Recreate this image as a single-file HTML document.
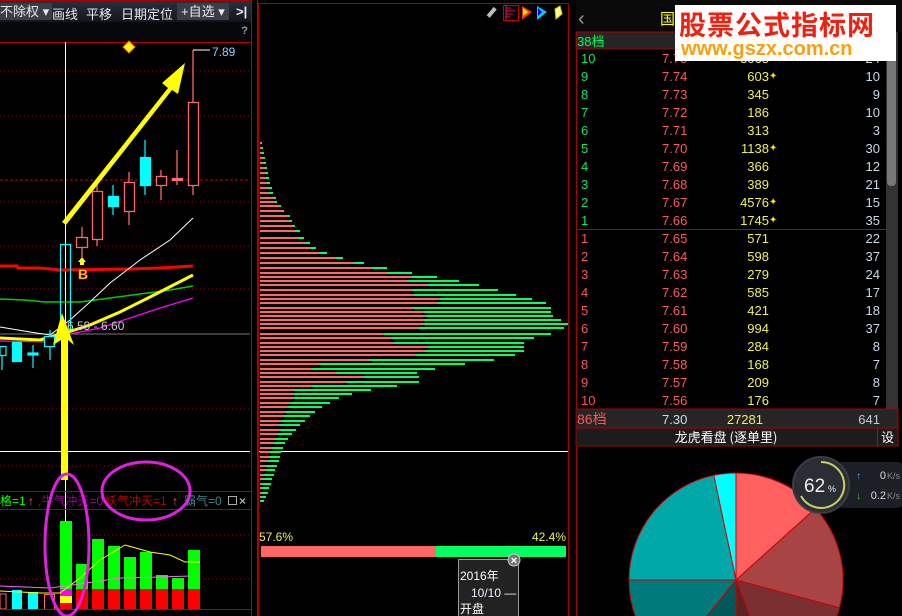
<!DOCTYPE html>
<html><head><meta charset="utf-8">
<style>
*{margin:0;padding:0;box-sizing:border-box}
html,body{width:902px;height:616px;overflow:hidden}
body{background:#000;position:relative;font-family:"Liberation Sans","Noto Sans CJK SC",sans-serif;color:#ddd}
.a{position:absolute}
svg{overflow:hidden}
.tb{left:0;top:0;width:252px;height:22px;background:linear-gradient(#2a2f3d,#12151c);font-size:13px;color:#e8e8e8;border-top:1px solid #a00}
.tb span{position:absolute;top:3px;white-space:nowrap}
.row{position:absolute;left:576px;width:310px;height:18px;font-size:13px;line-height:18px}
.row .l{position:absolute;left:5px}
.row .p{position:absolute;left:86px;color:#ff5a5a}
.row .v{position:absolute;right:117px;color:#f0f050;text-align:right}
.row .s{position:absolute;left:193px;color:#ffe000;font-size:10px}
.row .c{position:absolute;right:6px;color:#c8d8e8;text-align:right}
</style></head><body>

<div class="a tb">
<span style="left:-3px;background:#3a3e48;padding:0 3px;height:17px;top:2px;line-height:17px">不除权 ▾</span>
<span style="left:52px">画线</span><span style="left:86px">平移</span><span style="left:121px">日期定位</span>
<span style="left:177px;background:#3a3e48;padding:0 4px;height:17px;top:2px;line-height:17px">+自选 ▾</span>
<span style="left:236px;font-weight:bold">&gt;|</span>
</div>
<div class="a" style="left:0;top:22px;width:252px;height:20px;background:#07080b"><span class="a" style="right:4px;top:3px;font-size:11px;color:#999;font-weight:bold">?</span></div>

<svg class="a" style="left:0;top:0" width="902" height="616">
<line x1="0" y1="42.5" x2="252" y2="42.5" stroke="#b00"/>
<line x1="251.5" y1="0" x2="251.5" y2="616" stroke="#b00"/>
<line x1="257.5" y1="0" x2="257.5" y2="616" stroke="#b00"/>
<g stroke="#a00" stroke-dasharray="1 3">
<line x1="0" y1="71" x2="250" y2="71"/><line x1="0" y1="116" x2="250" y2="116"/>
<line x1="0" y1="202" x2="250" y2="202"/><line x1="0" y1="246" x2="250" y2="246"/>
<line x1="0" y1="289" x2="250" y2="289"/><line x1="0" y1="409" x2="250" y2="409"/>
<line x1="0" y1="466" x2="250" y2="466"/><line x1="0" y1="535" x2="250" y2="535"/><line x1="0" y1="579" x2="250" y2="579"/>
</g>
<line x1="0" y1="180" x2="250" y2="180" stroke="#c00" stroke-dasharray="3 2"/>
<line x1="0" y1="334" x2="250" y2="334" stroke="#777"/>
<line x1="0" y1="451.5" x2="250" y2="451.5" stroke="#fff"/>
<line x1="65.5" y1="42" x2="65.5" y2="600" stroke="#fff"/>
<polyline points="0,266 17,266 18,268 40,268 60,270 130,269 160,268 193,266" fill="none" stroke="#f00" stroke-width="3"/>
<polyline points="0,299 25,300 45,302 80,302 110,298 140,294 170,290 193,286" fill="none" stroke="#0c0" stroke-width="1.5"/>
<polyline points="0,327 30,332 50,335 70,320 90,302 110,283 140,260 170,240 193,218" fill="none" stroke="#fff" stroke-width="1"/>
<polyline points="0,338 40,340 65,333 90,325 120,312 150,297 193,275" fill="none" stroke="#ff0" stroke-width="3"/>
<polyline points="0,341 50,342 70,334 100,328 130,318 160,308 193,298" fill="none" stroke="#f0f" stroke-width="1.2"/>
<g fill="none" stroke="#f66" stroke-width="1.3">
<line x1="82" y1="227" x2="82" y2="257"/><rect x="76.5" y="237.5" width="11" height="10" fill="#000"/>
<line x1="97" y1="180" x2="97" y2="246"/><rect x="92.5" y="191.5" width="10" height="48" fill="#000"/>
<line x1="129" y1="172" x2="129" y2="225"/><rect x="124.5" y="182.5" width="10" height="29" fill="#000"/>
<line x1="161" y1="170" x2="161" y2="200"/><rect x="156.5" y="176.5" width="10" height="9" fill="#000"/>
<line x1="177" y1="150" x2="177" y2="185"/><rect x="172.5" y="178.5" width="10" height="2" fill="#6cc"/>
<line x1="193" y1="50" x2="193" y2="195"/><rect x="188.5" y="102.5" width="10" height="83" fill="#000"/>
<line x1="193" y1="50" x2="210" y2="50" stroke="#ccc"/>
</g>
<g stroke="#0ff" stroke-width="1.2">
<line x1="113" y1="185" x2="113" y2="215"/><rect x="108.5" y="196.5" width="10" height="10" fill="#0ff"/>
<line x1="145" y1="140" x2="145" y2="195"/><rect x="140.5" y="157.5" width="10" height="28" fill="#0ff"/>
<rect x="60.5" y="244.5" width="10" height="85" fill="none"/>
<rect x="0" y="346.5" width="6" height="9" fill="none"/>
<rect x="12.5" y="342.5" width="9" height="19" fill="#0ff"/>
<line x1="33" y1="345" x2="33" y2="368"/><rect x="28" y="353" width="10" height="2" fill="#0ff"/>
<line x1="50" y1="330" x2="50" y2="360"/><rect x="44.5" y="336.5" width="10" height="10" fill="#000"/>
<line x1="2" y1="355" x2="2" y2="370"/>
</g>
<text x="67" y="330" font-size="12" fill="#ccc" font-family="Liberation Sans">6.59 - 6.60</text>
<text x="212" y="56" font-size="12" fill="#9cf" font-family="Liberation Sans">7.89</text>
<polygon points="129,41 135,47 129,53 123,47" fill="#ff0" stroke="#f60"/>
<polygon points="82,257 86,262 84,262 84,265 80,265 80,262 78,262" fill="#ff0"/>
<text x="78" y="279" font-size="14" font-weight="bold" fill="#ff0" stroke="#f00" stroke-width="0.6" font-family="Liberation Sans">B</text>
<polygon points="62,222 168,88 162,83 185,63 178,94 172,90 66,225" fill="#ff0"/>
<polygon points="61,480 61,340 53,345 62,313 74,345 68,340 68,480" fill="#ff0"/>
<line x1="0" y1="491.5" x2="251" y2="491.5" stroke="#a00"/>
<line x1="0" y1="509.5" x2="251" y2="509.5" stroke="#a00"/>
<g font-size="12" font-family="Liberation Sans,Noto Sans CJK SC,sans-serif">
<text x="0" y="505" fill="#0f0">格=1</text><text x="28" y="505" fill="#f66">↑</text>
<text x="38" y="505" fill="#909">,牛气冲天=0</text>
<text x="105" y="505" fill="#b00">妖气冲天=1</text><text x="172" y="505" fill="#f66">↑</text>
<text x="184" y="505" fill="#488">霸气=0</text>
<rect x="228.5" y="496.5" width="8" height="8" fill="none" stroke="#aaa"/>
<text x="239" y="505" fill="#aaa" font-weight="bold">×</text>
</g>
<g fill="#0f0">
<rect x="60" y="521" width="12" height="68"/><rect x="76" y="564" width="12" height="25"/>
<rect x="92" y="539" width="12" height="50"/><rect x="108" y="546" width="12" height="43"/>
<rect x="124" y="557" width="12" height="32"/><rect x="140" y="552" width="12" height="37"/>
<rect x="156" y="575" width="12" height="14"/><rect x="172" y="578" width="12" height="11"/>
<rect x="188" y="550" width="12" height="39"/></g>
<g fill="#f00">
<rect x="76" y="589" width="12" height="20"/><rect x="92" y="589" width="12" height="20"/>
<rect x="108" y="589" width="12" height="20"/><rect x="124" y="589" width="12" height="20"/>
<rect x="140" y="589" width="12" height="20"/><rect x="156" y="589" width="12" height="20"/>
<rect x="172" y="589" width="12" height="20"/><rect x="188" y="589" width="12" height="20"/>
<rect x="60" y="603" width="12" height="6"/></g>
<rect x="60" y="589" width="12" height="7" fill="#f0f"/><rect x="60" y="596" width="12" height="7" fill="#ff0"/>
<rect x="12" y="590" width="10" height="19" fill="#0ff"/><rect x="28" y="592" width="10" height="17" fill="#0ff"/>
<rect x="0" y="594" width="6" height="15" fill="none" stroke="#f66"/><rect x="44.5" y="594.5" width="10" height="15" fill="none" stroke="#f66"/>
<polyline points="0,591 40,593 60,593 80,578 100,560 125,545 150,552 170,555 185,562 200,562" fill="none" stroke="#ff0"/>
<polyline points="0,586 50,588 80,584 120,578 160,577 190,576" fill="none" stroke="#f6f"/>
<line x1="0" y1="609.5" x2="251" y2="609.5" stroke="#b00"/>
<g fill="none" stroke="#e020e0" stroke-width="3">
<ellipse cx="67" cy="545" rx="22" ry="71"/>
<ellipse cx="146" cy="491" rx="44" ry="29"/>
<ellipse cx="672" cy="19" rx="28" ry="14"/>
</g>

<rect x="258.5" y="3.5" width="310" height="620" fill="none" stroke="#a00"/>
<line x1="259" y1="451.5" x2="568" y2="451.5" stroke="#fff"/>
<g id="prof"></g>
<text x="259" y="541" font-size="12" fill="#ee5" font-family="Liberation Sans">57.6%</text>
<text x="566" y="541" font-size="12" fill="#ee5" text-anchor="end" font-family="Liberation Sans">42.4%</text>
<rect x="261" y="546" width="175" height="11" fill="#f66"/><rect x="436" y="546" width="130" height="11" fill="#00ff60"/>
<rect x="458.5" y="559.5" width="60" height="60" fill="#222" stroke="#999"/>
<circle cx="514" cy="560" r="6" fill="#777" stroke="#ccc"/><text x="514" y="564" font-size="11" fill="#fff" text-anchor="middle" font-weight="bold">×</text>
<g font-size="12" fill="#fff" font-family="Liberation Sans,Noto Sans CJK SC,sans-serif">
<text x="460" y="580">2016年</text><text x="471" y="597" fill="#eef">10/10 —</text><text x="460" y="613">开盘</text></g>
<rect x="490" y="7" width="4" height="11" fill="#bbb" transform="rotate(40 492 12)"/>
<rect x="503.5" y="5.5" width="15" height="15" fill="none" stroke="#c00"/>
<g stroke="#f06" stroke-width="1"><line x1="506" y1="6" x2="506" y2="20"/><line x1="506" y1="8" x2="511" y2="8"/><line x1="506" y1="11" x2="515" y2="11"/><line x1="506" y1="14" x2="513" y2="14"/><line x1="506" y1="17" x2="510" y2="17"/></g>
<polygon points="522,6 532,12 522,20" fill="#f30"/><polygon points="523,8 528,12 523,16" fill="#ff0"/>
<polygon points="537,6 547,12 537,20" fill="#0cf"/><polygon points="538,8 542,12 538,16" fill="#00f"/>
<polygon points="555,9 560,6 562,14 556,19" fill="#ff8" stroke="#cc0"/>

<rect x="576" y="0" width="326" height="32" fill="#0a0a0a"/>
<text x="578" y="25" font-size="20" fill="#999" font-family="Liberation Sans">‹</text>
<text x="660" y="24" font-size="15" fill="#ff0" font-family="Noto Sans CJK SC">国</text>
<rect x="576" y="32" width="310" height="17" fill="#252525" stroke="#a00"/>
<text x="577" y="46" font-size="13" fill="#0f6" font-family="Liberation Sans,Noto Sans CJK SC">38档</text>
<line x1="576" y1="229.5" x2="886" y2="229.5" stroke="#b00"/>
<line x1="576.5" y1="32" x2="576.5" y2="616" stroke="#a00"/>
<rect x="886" y="32" width="12" height="395" fill="#333"/><rect x="887" y="58" width="9" height="128" rx="4" fill="#777"/>
<rect x="576" y="409" width="322" height="19" fill="#252525" stroke="#a00"/>
<rect x="576" y="428" width="322" height="18" fill="#1c1c1c" stroke="#a00"/>
<line x1="877.5" y1="428" x2="877.5" y2="446" stroke="#c00"/>
<text x="577" y="424" font-size="14" fill="#f55" font-family="Liberation Sans,Noto Sans CJK SC">86档</text>
<text x="662" y="424" font-size="13" fill="#cde" font-family="Liberation Sans">7.30</text>
<text x="763" y="424" font-size="13" fill="#ee5" text-anchor="end" font-family="Liberation Sans">27281</text>
<text x="880" y="424" font-size="13" fill="#bcd" text-anchor="end" font-family="Liberation Sans">641</text>
<text x="726" y="442" font-size="13" fill="#fff" text-anchor="middle" font-family="Noto Sans CJK SC">龙虎看盘 (逐单里)</text>
<text x="881" y="442" font-size="13" fill="#fff" font-family="Noto Sans CJK SC">设</text>
<g stroke="#c00" stroke-width="1">
<path d="M736,580 L736,473 A107,107 0 0 1 815.5,508.4 Z" fill="#ff6060"/>
<path d="M736,580 L815.5,508.4 A107,107 0 0 1 839.4,607.7 Z" fill="#a84444"/>
<path d="M736,580 L839.4,607.7 A107,107 0 0 1 774.3,680 Z" fill="#7a3030"/>
<path d="M736,580 L774.3,680 A107,107 0 0 1 736,687 Z" fill="#5a2424"/>
<path d="M736,580 L736,687 A107,107 0 0 1 668.7,663 Z" fill="#005858"/>
<path d="M736,580 L668.7,663 A107,107 0 0 1 629,580 Z" fill="#007a7a"/>
<path d="M736,580 L629,580 A107,107 0 0 1 713.8,475.3 Z" fill="#00a8a8"/>
<path d="M736,580 L713.8,475.3 A107,107 0 0 1 736,473 Z" fill="#00ffff"/>
</g>
<rect x="835" y="462" width="70" height="46" rx="8" fill="#1e2128" opacity="0.95"/>
<circle cx="821" cy="485" r="28" fill="#2a2d34" stroke="#3a3d44" stroke-width="2"/>
<path d="M821,462 A23,23 0 1 1 801,496" fill="none" stroke="#c8d060" stroke-width="2"/>
<text x="804" y="492" font-size="19" fill="#eee" font-family="Liberation Sans">62</text><text x="828" y="492" font-size="9" fill="#eee">%</text>
<text x="856" y="479" font-size="10" fill="#4af">↑</text><text x="856" y="499" font-size="10" fill="#3c3">↓</text>
<text x="886" y="479" font-size="11" fill="#ddd" text-anchor="end" font-family="Liberation Sans">0</text><text x="887" y="479" font-size="9" fill="#888">K/s</text>
<text x="886" y="499" font-size="11" fill="#ddd" text-anchor="end" font-family="Liberation Sans">0.2</text><text x="887" y="499" font-size="9" fill="#888">K/s</text>
</svg>

<div id="rows"></div>
<div class="a" style="left:675px;top:5px;width:221px;height:56px;background:#fff;overflow:hidden">
<div class="a" style="left:4px;top:-1px;font-size:27px;font-weight:bold;color:#f02010;font-family:'Noto Sans CJK SC',sans-serif;letter-spacing:1px;white-space:nowrap">股票公式指标网</div>
<div class="a" style="left:6px;top:33px;font-size:20px;font-weight:bold;color:#f8a010;font-family:'Liberation Sans',sans-serif;white-space:nowrap">www.gszx.com.cn</div>
</div>

<script>
var sell=[["10","7.75","3068",1,"24"],["9","7.74","603",1,"10"],["8","7.73","345",0,"9"],["7","7.72","186",0,"10"],["6","7.71","313",0,"3"],["5","7.70","1138",1,"30"],["4","7.69","366",0,"12"],["3","7.68","389",0,"21"],["2","7.67","4576",1,"15"],["1","7.66","1745",1,"35"]];
var buy=[["1","7.65","571",0,"22"],["2","7.64","598",0,"37"],["3","7.63","279",0,"24"],["4","7.62","585",0,"17"],["5","7.61","421",0,"18"],["6","7.60","994",0,"37"],["7","7.59","284",0,"8"],["8","7.58","168",0,"7"],["9","7.57","209",0,"8"],["10","7.56","176",0,"7"]];
var h="";
function mk(r,y,col){h+='<div class="row" style="top:'+y+'px"><span class="l" style="color:'+col+'">'+r[0]+'</span><span class="p">'+r[1]+'</span><span class="v">'+r[2]+'</span>'+(r[3]?'<span class="s">✦</span>':'')+'<span class="c">'+r[4]+'</span></div>';}
sell.forEach(function(r,i){mk(r,50+i*18,"#0e6")});
buy.forEach(function(r,i){mk(r,230+i*18,"#f55")});
document.getElementById("rows").innerHTML=h;
var d=[[142,261,262],[147,261,263],[152,262,264],[157,263,265],[162,264,266],[167,265,267],[172,265,268],[177,266,269],[182,267,270],[187,268,272],[192,270,273],[197,273,276],[201,275,277],[205,280,281],[210,283,284],[215,287,290],[220,289,292],[225,293,295],[230,295,300],[237,298,304],[242,305,310],[247,310,316],[252,319,327],[257,335,343],[262,354,364],[267,372,387],[272,387,412],[276,412,437],[280,407,459],[284,427,479],[289,412,498],[294,414,516],[298,440,532],[302,437,546],[307,413,551],[311,424,551],[315,426,553],[319,424,561],[323,423,568],[327,418,564],[333,384,551],[337,391,534],[342,393,524],[346,427,524],[350,425,524],[354,416,515],[359,369,494],[363,319,465],[368,312,435],[372,336,417],[376,364,419],[381,346,419],[385,312,397],[389,293,371],[393,294,352],[397,293,339],[402,290,330],[406,288,322],[411,285,315],[415,283,310],[420,282,305],[424,280,300],[429,279,296],[433,277,292],[438,275,288],[442,274,285],[447,272,283],[451,270,281],[456,269,280],[460,268,279],[465,266,277],[469,265,275],[474,264,274],[478,263,272],[483,262,271],[487,262,269],[492,261,268],[496,261,266],[500,260,264]];
var s="";d.forEach(function(r){s+='<rect x="260" y="'+r[0]+'" width="'+(r[1]-260)+'" height="2" fill="#f66"/><rect x="'+r[1]+'" y="'+r[0]+'" width="'+(r[2]-r[1])+'" height="2" fill="#00ff60"/>';});
document.getElementById("prof").innerHTML=s;
</script>
</body></html>
